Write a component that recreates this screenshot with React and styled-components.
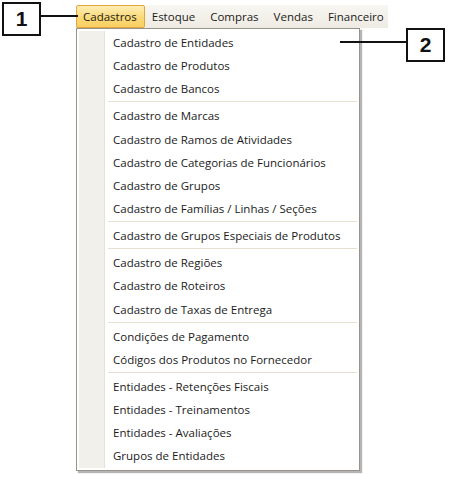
import React from "react";
import styled, { createGlobalStyle } from "styled-components";

const topMenu = ["Cadastros", "Estoque", "Compras", "Vendas", "Financeiro"];

// null marks a separator line
const entries = [
  "Cadastro de Entidades",
  "Cadastro de Produtos",
  "Cadastro de Bancos",
  null,
  "Cadastro de Marcas",
  "Cadastro de Ramos de Atividades",
  "Cadastro de Categorias de Funcionários",
  "Cadastro de Grupos",
  "Cadastro de Famílias / Linhas / Seções",
  null,
  "Cadastro de Grupos Especiais de Produtos",
  null,
  "Cadastro de Regiões",
  "Cadastro de Roteiros",
  "Cadastro de Taxas de Entrega",
  null,
  "Condições de Pagamento",
  "Códigos dos Produtos no Fornecedor",
  null,
  "Entidades - Retenções Fiscais",
  "Entidades - Treinamentos",
  "Entidades - Avaliações",
  "Grupos de Entidades",
];

const App = () => {
  return (
    <>
      <GlobalStyle />
      <Canvas>
        <MenuArea>
          <MenuBar>
            {topMenu.map((name, index) => (
              <BarItem key={name} active={index === 0}>
                {name}
              </BarItem>
            ))}
          </MenuBar>
          <Dropdown>
            <Gutter />
            <List>
              {entries.map((entry, index) =>
                entry ? (
                  <Entry key={index}>{entry}</Entry>
                ) : (
                  <Separator key={index} />
                )
              )}
            </List>
          </Dropdown>
        </MenuArea>

        <Callout left={2} top={2}>1</Callout>
        <Leader left={41} top={15} width={37} />
        <Callout left={406} top={28}>2</Callout>
        <Leader left={340} top={41} width={66} />
      </Canvas>
    </>
  );
};

const GlobalStyle = createGlobalStyle`
  body {
    margin: 0;
    background: #fff;
    font-family: "Open Sans", "Noto Sans", sans-serif;
  }
`;

const Canvas = styled.div`
  position: relative;
  width: 450px;
  height: 477px;
  overflow: hidden;
  background: #fff;
`;

const MenuArea = styled.div`
  padding: 5px 0 0 76px;
  display: flex;
  flex-direction: column;
  align-items: flex-start;
`;

const MenuBar = styled.div`
  display: flex;
  align-items: stretch;
  width: 312px;
  height: 23px;
  background: linear-gradient(#f8f6f1, #eeebe3);
`;

const BarItem = styled.div`
  box-sizing: border-box;
  padding: 0 7px 0 6px;
  font-size: 11.5px;
  line-height: 21px;
  color: #1b1b1b;
  white-space: nowrap;
  border: 1px solid ${(p) => (p.active ? "#e4a53c" : "transparent")};
  border-radius: 2px;
  background: ${(p) =>
    p.active ? "linear-gradient(#fdedb6, #fbd978 55%, #f9cf63)" : "transparent"};
`;

const Dropdown = styled.div`
  display: flex;
  width: 284px;
  box-sizing: border-box;
  border: 1px solid #97938c;
  background: #fff;
  padding: 2px;
  box-shadow: 2px 2px 1px rgba(90, 90, 90, 0.45);
`;

const Gutter = styled.div`
  width: 25px;
  flex: none;
  background: #f2f0ea;
  border-right: 1px solid #e4e1d9;
  box-shadow: 1px 0 0 #fff;
`;

const List = styled.div`
  flex: 1;
  display: flex;
  flex-direction: column;
  padding-left: 2px;
`;

const Entry = styled.div`
  height: 23.15px;
  line-height: 24px;
  padding-left: 6px;
  font-size: 11.5px;
  color: #1b1b1b;
  white-space: nowrap;
`;

const Separator = styled.div`
  height: 1px;
  margin: 1px 0 2px 1px;
  background: #e6dfd2;
  box-shadow: 0 1px 0 #fff;
`;

const Callout = styled.div`
  position: absolute;
  left: ${(p) => p.left}px;
  top: ${(p) => p.top}px;
  width: 39px;
  height: 34px;
  box-sizing: border-box;
  border: 2px solid #111;
  background: #fff;
  display: flex;
  align-items: center;
  justify-content: center;
  font-family: "Liberation Sans", Arial, sans-serif;
  font-weight: bold;
  font-size: 21px;
  color: #111;
`;

const Leader = styled.div`
  position: absolute;
  left: ${(p) => p.left}px;
  top: ${(p) => p.top}px;
  width: ${(p) => p.width}px;
  height: 2px;
  background: #111;
`;

export default App;
